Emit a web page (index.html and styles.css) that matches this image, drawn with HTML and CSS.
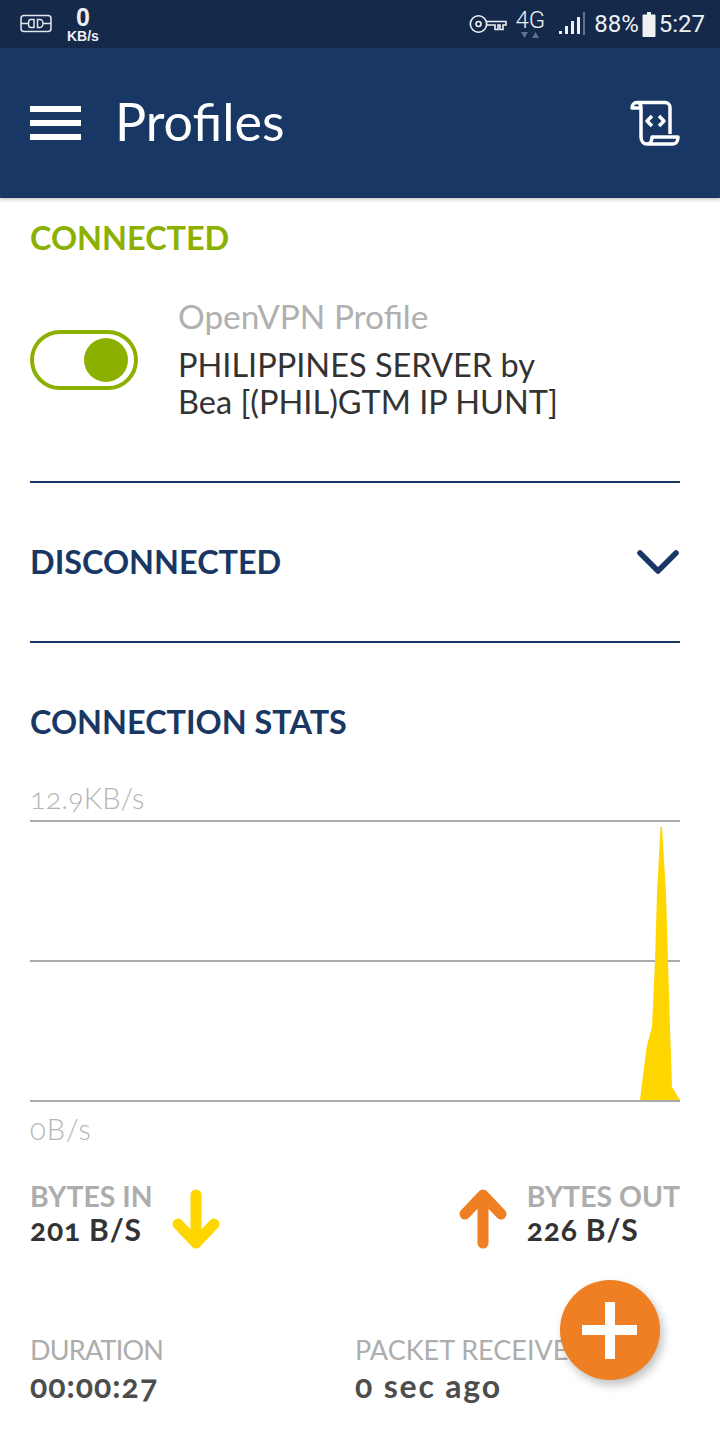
FILE: index.html
```html
<!DOCTYPE html>
<html lang="en">
<head>
    <meta charset="UTF-8">
    <meta name="viewport" content="width=device-width, initial-scale=1.0">
    <title>Profiles</title>
    <link rel="stylesheet" href="styles.css">
</head>
<body>
    <div class="status-bar">
        <div class="status-left">
            <svg class="vpn-plug" width="32" height="20" viewBox="0 0 32 20" fill="none" stroke="#e4e8ee" stroke-width="1.5">
                <rect x="1" y="1.5" width="30" height="16" rx="3"/>
                <path d="M1 9.5h8M23 9.5h8M14 5.5h-3.500a2 4 0 0 0 0 8h3.500zM17.500 5.500h2.500a3 4 0 0 1 0 8h-2.500z"/>
            </svg>
            <div class="net-speed">
                <span class="net-num">0</span>
                <span class="net-unit">KB/s</span>
            </div>
        </div>
        <div class="status-right">
            <svg width="38" height="20" viewBox="0 0 38 20" fill="none" stroke="#eef0f4" stroke-width="1.6">
                <circle cx="9.500" cy="10" r="8.200"/>
                <circle cx="9.500" cy="10" r="2.500"/>
                <path d="M18 7.500h19v3.500h-3v4.500h-3v-4.500h-2v4.500h-3v-4.500h-8"/>
            </svg>
            <div class="net-type">
                <span>4G</span>
                <svg width="20" height="7" viewBox="0 0 20 7" fill="#5f7391"><path d="M1 0h7l-3.500 6zM12 6h7l-3.500-6z"/></svg>
            </div>
            <svg class="signal" width="27" height="24" viewBox="0 0 27 24" fill="#eef0f4">
                <rect x="0" y="19" width="3" height="3"/>
                <rect x="6" y="14" width="3" height="8"/>
                <rect x="12" y="9" width="3" height="13"/>
                <rect x="18" y="5" width="3" height="17"/>
                <rect x="24" y="0" width="2" height="23" fill="#5f7391"/>
            </svg>
            <span class="status-text">88%</span>
            <svg width="14" height="25" viewBox="0 0 14 25" fill="#eef0f4"><path d="M5 0h4v2.500h3.500a1 1 0 0 1 1 1V24a1 1 0 0 1-1 1h-11a1 1 0 0 1-1-1V3.500a1 1 0 0 1 1-1H5z"/></svg>
            <span class="status-text">5:27</span>
        </div>
    </div>

    <header class="toolbar">
        <div class="menu-icon"><span></span><span></span><span></span></div>
        <h1>Profiles</h1>
        <svg class="script-icon" width="50" height="46" viewBox="0 0 50 46" fill="none" stroke="#fff" stroke-width="3.500" stroke-linejoin="round">
            <path d="M7 2.500h28a5 5 0 0 1 5 5V34M2 8c0-3 2-5.500 5-5.500s4 2.500 4 5.500zM11 8v29c0 4 2.500 7 6 7h26c3 0 5-3 5-7H22c0 3-1.500 7-5 7"/>
            <path d="M22 16l-5 5 5 5M29 16l5 5-5 5" stroke-width="3.500"/>
        </svg>
    </header>

    <main class="content">
        <section class="connected">
            <h2 class="heading-green">CONNECTED</h2>
            <div class="profile-row">
                <div class="toggle"><span class="knob"></span></div>
                <div class="profile-text">
                    <div class="profile-type">OpenVPN Profile</div>
                    <div class="profile-name">PHILIPPINES SERVER by<br>Bea [(PHIL)GTM IP HUNT]</div>
                </div>
            </div>
        </section>

        <section class="disconnected">
            <h2 class="heading-blue">DISCONNECTED</h2>
            <svg width="44" height="26" viewBox="0 0 44 26" fill="none" stroke="#193764" stroke-width="5.500" stroke-linecap="round" stroke-linejoin="round"><path d="M4 4l18 18L40 4"/></svg>
        </section>

        <section class="stats">
            <h2 class="heading-blue">CONNECTION STATS</h2>
            <div class="chart-label top">12.9KB/s</div>
            <svg class="chart" width="650" height="282" viewBox="0 0 650 282">
                <path d="M0 1h650M0 141h650M0 281h650" stroke="#aaa" stroke-width="2" fill="none"/>
                <path d="M610 280L613 255 617 225 622 207 625 141 627 73 630.500 7 632 7 636 73 638 141 640 207 642 267 650 280z" fill="#ffd600"/>
            </svg>
            <div class="chart-label bottom">0B/s</div>

            <div class="bytes-row">
                <div class="bytes-item">
                    <div>
                        <div class="bytes-label">BYTES IN</div>
                        <div class="bytes-value">201 B/S</div>
                    </div>
                    <svg class="arrow-in" width="48" height="60" viewBox="0 0 48 60" fill="none" stroke="#ffd600" stroke-width="11" stroke-linecap="round" stroke-linejoin="round"><path d="M24 6v48M6 35l18 19 18-19"/></svg>
                </div>
                <div class="bytes-item">
                    <svg class="arrow-out" width="48" height="60" viewBox="0 0 48 60" fill="none" stroke="#ee7f22" stroke-width="11" stroke-linecap="round" stroke-linejoin="round"><path d="M24 54V6M6 25L24 6l18 19"/></svg>
                    <div>
                        <div class="bytes-label">BYTES OUT</div>
                        <div class="bytes-value">226 B/S</div>
                    </div>
                </div>
            </div>

            <div class="info-row">
                <div class="info-item">
                    <div class="info-label narrow">DURATION</div>
                    <div class="info-value">00:00:27</div>
                </div>
                <div class="info-item">
                    <div class="info-label">PACKET RECEIVED</div>
                    <div class="info-value wide">0 sec ago</div>
                </div>
            </div>
        </section>
    </main>

    <button class="fab"><span class="plus-h"></span><span class="plus-v"></span></button>
</body>
</html>
```

FILE: styles.css
```css
body {
    font-family: Lato, "Open Sans", sans-serif;
    margin: 0;
    padding: 0;
    background-color: #fff;
    height: 1440px;
    overflow: hidden;
    position: relative;
}
h1, h2 {
    margin: 0;
}
.status-bar {
    background-color: #15294a;
    height: 48px;
    display: flex;
    justify-content: space-between;
    align-items: center;
    padding: 0 15px 0 20px;
    color: #eef0f4;
}
.status-left, .status-right {
    display: flex;
    align-items: center;
}
.net-speed {
    display: flex;
    flex-direction: column;
    align-items: center;
    margin-left: 15px;
    font-family: "Liberation Sans", sans-serif;
    font-weight: bold;
}
.net-num {
    font-size: 25px;
    line-height: 23px;
}
.net-unit {
    font-size: 14px;
    line-height: 14px;
}
.net-type {
    display: flex;
    flex-direction: column;
    align-items: center;
    margin: 0 14px 0 8px;
    font-family: Roboto, sans-serif;
    font-weight: 300;
    font-size: 24px;
    line-height: 23px;
}
.signal {
    margin-right: 8px;
}
.status-text {
    font-family: Roboto, sans-serif;
    font-size: 24px;
    margin-right: 3px;
}
.status-text:last-child {
    margin: 0 0 0 3px;
}
.toolbar {
    background-color: #193764;
    height: 150px;
    display: flex;
    align-items: center;
    padding: 0 40px 0 30px;
    color: white;
    box-shadow: 0 2px 3px rgba(0, 0, 0, 0.2);
}
.toolbar h1 {
    font-size: 52px;
    font-weight: 400;
    margin-left: 34px;
    flex: 1;
    position: relative;
    top: -2px;
}
.menu-icon {
    display: flex;
    flex-direction: column;
    gap: 8px;
    width: 51px;
}
.menu-icon span {
    height: 6px;
    background: white;
}
.content {
    padding: 0 40px 0 30px;
    font-variant-numeric: oldstyle-nums;
}
.heading-green, .heading-blue {
    font-size: 32.400px;
    font-weight: 700;
    line-height: 36px;
}
.heading-green {
    color: #8bb000;
}
.heading-blue {
    color: #193764;
}
.connected {
    padding-top: 22px;
    box-sizing: border-box;
    border-bottom: 2px solid #193764;
    height: 285px;
}
.profile-row {
    display: flex;
    align-items: center;
    margin-top: 38px;
}
.toggle {
    width: 108px;
    height: 60px;
    box-sizing: border-box;
    border: 4px solid #8bb000;
    border-radius: 30px;
    display: flex;
    align-items: center;
    justify-content: flex-end;
    padding-right: 6px;
    margin: 5px 40px 0 0;
}
.knob {
    width: 44px;
    height: 44px;
    border-radius: 50%;
    background: #8bb000;
}
.profile-type {
    font-size: 33.400px;
    color: #b0b0b0;
    line-height: 44px;
    margin-bottom: 8px;
}
.profile-name {
    font-size: 32.500px;
    color: #333;
    line-height: 37px;
    white-space: nowrap;
}
.disconnected {
    display: flex;
    justify-content: space-between;
    align-items: center;
    height: 160px;
    box-sizing: border-box;
    border-bottom: 2px solid #193764;
}
.stats {
    padding-top: 61px;
}
.chart-label {
    font-size: 29px;
    color: #b5b5b5;
    font-weight: 300;
    line-height: 32px;
}
.chart-label.top {
    margin-top: 42px;
}
.chart {
    display: block;
    margin-top: 6px;
}
.chart-label.bottom {
    margin-top: 11px;
    letter-spacing: 1px;
}
.bytes-row {
    display: flex;
    justify-content: space-between;
    margin-top: 35px;
}
.bytes-item {
    display: flex;
    align-items: flex-start;
}
.arrow-in {
    margin-left: 19px;
    margin-top: 9px;
}
.arrow-out {
    margin-right: 20px;
    margin-top: 9px;
}
.bytes-label {
    font-size: 28.400px;
    font-weight: 700;
    color: #adadad;
    line-height: 33px;
}
.bytes-value {
    font-size: 30px;
    font-weight: 700;
    color: #333;
    line-height: 32px;
    letter-spacing: 0.800px;
}
.info-row {
    display: flex;
    margin-top: 84px;
}
.info-item {
    width: 326px;
}
.info-label {
    font-size: 27px;
    color: #adadad;
    line-height: 34px;
    white-space: nowrap;
}
.info-label.narrow {
    letter-spacing: -0.800px;
}
.info-value {
    font-size: 32px;
    font-weight: 700;
    color: #4d4d4d;
    line-height: 38px;
    letter-spacing: 1px;
}
.info-value.wide {
    letter-spacing: 1.800px;
}
.fab {
    position: absolute;
    left: 560px;
    top: 1280px;
    width: 100px;
    height: 100px;
    border: none;
    border-radius: 50%;
    background-color: #ee7f22;
    box-shadow: 3px 5px 10px rgba(0, 0, 0, 0.25);
    padding: 0;
}
.plus-h {
    position: absolute;
    left: 22px;
    top: 45px;
    width: 55px;
    height: 10px;
    background: white;
}
.plus-v {
    position: absolute;
    left: 45px;
    top: 22px;
    width: 10px;
    height: 57px;
    background: white;
}
```
